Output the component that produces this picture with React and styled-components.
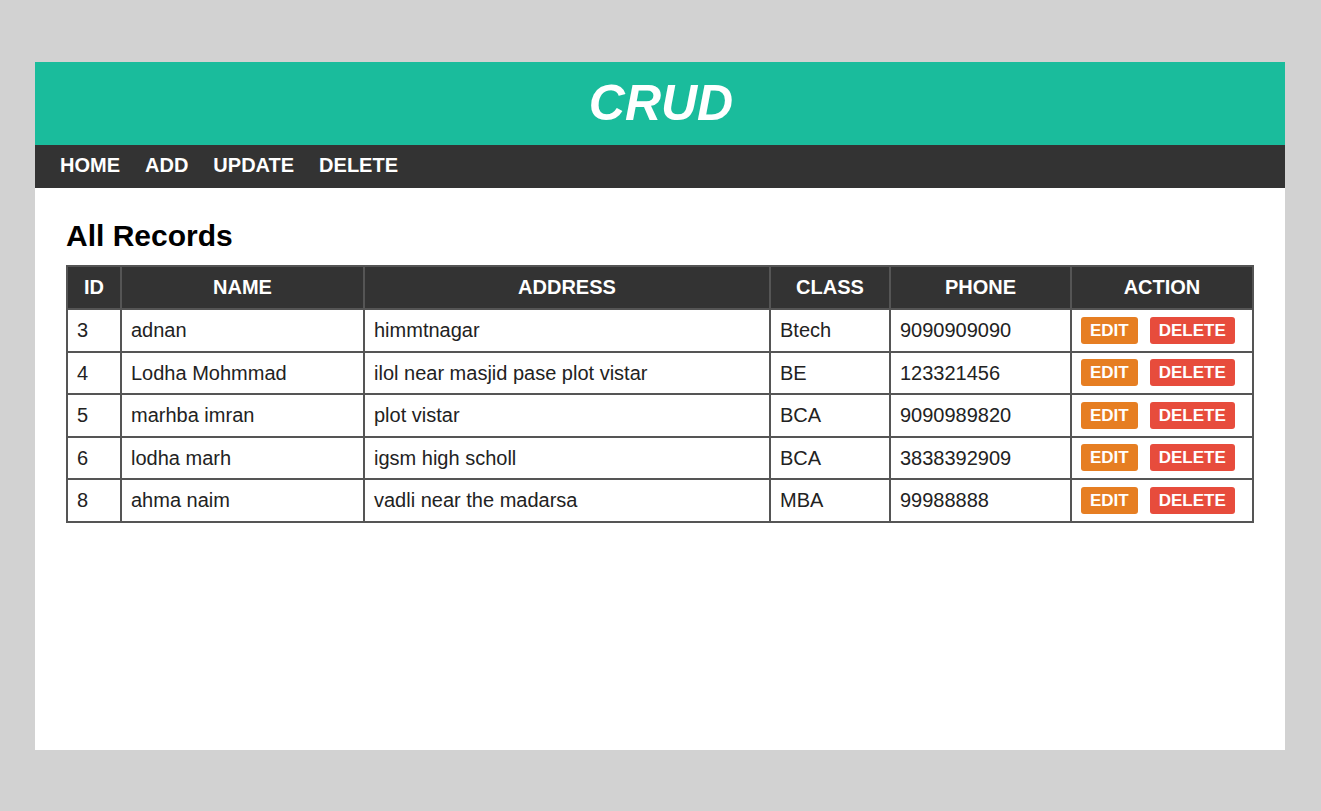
import React from "react";
import styled, { createGlobalStyle } from "styled-components";

const Global = createGlobalStyle`
  html, body { margin: 0; padding: 0; background: #d2d2d2; }
  body { font-family: "Liberation Sans", Arial, sans-serif; }
  #root { padding: 62px 36px 61px 35px; }
`;

const Page = styled.div`
  min-height: 688px;
  background: #fff;
  display: flex;
  flex-direction: column;
`;

const Header = styled.header`
  height: 83px;
  background: #1abc9c;
  display: flex;
  align-items: center;
  justify-content: center;
`;

const Title = styled.h1`
  margin: 0;
  color: #fff;
  font-size: 50px;
  font-weight: bold;
  font-style: italic;
  line-height: 1;
  transform: translate(1px, -1px);
`;

const Nav = styled.nav`
  height: 43px;
  background: #333;
  display: flex;
  align-items: center;
  gap: 25px;
  padding: 0 25px 3px;
  box-sizing: border-box;
`;

const NavLink = styled.a`
  color: #fff;
  font-size: 20px;
  font-weight: bold;
  text-decoration: none;
  line-height: 1;
`;

const Content = styled.main`
  padding: 31px 32px 0 31px;
`;

const Heading = styled.h2`
  margin: 0 0 12px;
  font-size: 30px;
  font-weight: bold;
  color: #000;
  line-height: 34px;
`;

const Table = styled.table`
  width: 1186px;
  border-collapse: collapse;
  table-layout: fixed;
  border: 2px solid #555;
`;

const Th = styled.th`
  background: #333;
  color: #fff;
  font-size: 20px;
  font-weight: bold;
  border: 2px solid #555;
  padding: 9px 10px;
  line-height: 23px;
  text-align: center;
`;

const Td = styled.td`
  font-size: 20px;
  color: #222;
  border: 2px solid #555;
  padding: 9px 9px;
  line-height: 22.5px;
  height: 22.5px;
  text-align: left;
  white-space: nowrap;
`;

const Actions = styled.div`
  display: flex;
  gap: 12px;
  align-items: center;
  height: 22.5px;
`;

const Btn = styled.button`
  flex: none;
  border: none;
  border-radius: 3px;
  height: 27px;
  padding: 0 9px;
  background: ${(p) => (p.$kind === "delete" ? "#e74c3c" : "#e67e22")};
  color: #fff;
  font-family: "Liberation Sans", Arial, sans-serif;
  font-size: 17px;
  font-weight: bold;
  line-height: 27px;
  cursor: pointer;
`;

const rows = [
  ["3", "adnan", "himmtnagar", "Btech", "9090909090"],
  ["4", "Lodha Mohmmad", "ilol near masjid pase plot vistar", "BE", "123321456"],
  ["5", "marhba imran", "plot vistar", "BCA", "9090989820"],
  ["6", "lodha marh", "igsm high scholl", "BCA", "3838392909"],
  ["8", "ahma naim", "vadli near the madarsa", "MBA", "99988888"],
];

const widths = [54, 243, 406, 120, 181, 182];
const heads = ["ID", "NAME", "ADDRESS", "CLASS", "PHONE", "ACTION"];

export default function App() {
  return (
    <>
      <Global />
      <Page>
        <Header>
          <Title>CRUD</Title>
        </Header>
        <Nav>
          <NavLink href="#">HOME</NavLink>
          <NavLink href="#">ADD</NavLink>
          <NavLink href="#">UPDATE</NavLink>
          <NavLink href="#">DELETE</NavLink>
        </Nav>
        <Content>
          <Heading>All Records</Heading>
          <Table>
            <colgroup>
              {widths.map((w, i) => (
                <col key={i} style={{ width: w }} />
              ))}
            </colgroup>
            <thead>
              <tr>
                {heads.map((h) => (
                  <Th key={h}>{h}</Th>
                ))}
              </tr>
            </thead>
            <tbody>
              {rows.map((r) => (
                <tr key={r[0]}>
                  {r.map((c, i) => (
                    <Td key={i}>{c}</Td>
                  ))}
                  <Td>
                    <Actions>
                      <Btn>EDIT</Btn>
                      <Btn $kind="delete">DELETE</Btn>
                    </Actions>
                  </Td>
                </tr>
              ))}
            </tbody>
          </Table>
        </Content>
      </Page>
    </>
  );
}
